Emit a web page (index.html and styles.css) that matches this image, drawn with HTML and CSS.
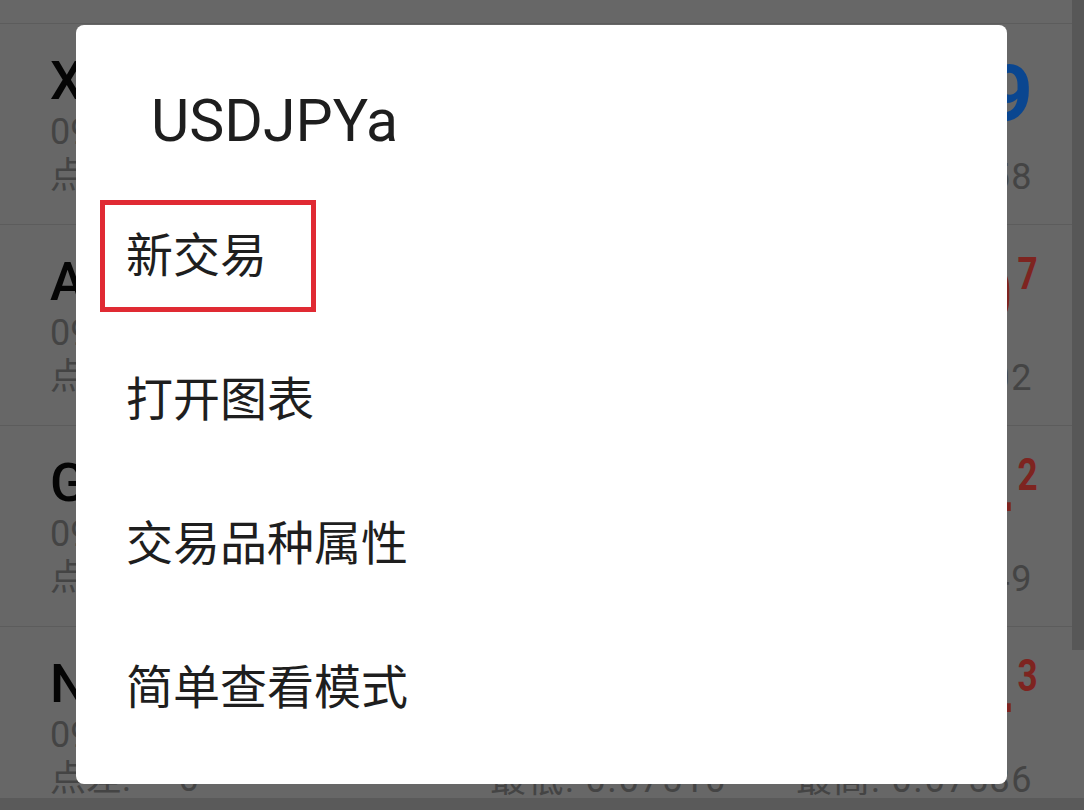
FILE: index.html
```html
<!DOCTYPE html>
<html lang="zh-CN">
<head>
<meta charset="utf-8">
<title>USDJPYa</title>
<link rel="stylesheet" href="styles.css">
</head>
<body>
<div class="screen">
  <div class="quotes">
    <div class="row row-stub"></div>
    <div class="row">
      <div class="col col-left">
        <div class="symbol">XAUUSDa</div>
        <div class="sub">09:41:27</div>
        <div class="sub sub-last">点差:<span class="spread">27</span></div>
      </div>
      <div class="col col-mid">
        <div class="price blue"><span class="p-small">2331.</span><span class="p-big">6</span></div>
        <div class="sub sub-last">最低: 2318.27</div>
      </div>
      <div class="col col-right">
        <div class="price blue"><span class="p-small">2331.</span><span class="p-big">9</span></div>
        <div class="sub sub-last">最高: 2339.58</div>
      </div>
    </div>
    <div class="row">
      <div class="col col-left">
        <div class="symbol">AUDUSDa</div>
        <div class="sub">09:41:26</div>
        <div class="sub sub-last">点差:<span class="spread">18</span></div>
      </div>
      <div class="col col-mid">
        <div class="price red"><span class="p-small">0.66</span><span class="p-big">08</span><span class="p-sup">9</span></div>
        <div class="sub sub-last">最低: 0.66011</div>
      </div>
      <div class="col col-right">
        <div class="price red"><span class="p-small">0.66</span><span class="p-big">10</span><span class="p-sup">7</span></div>
        <div class="sub sub-last">最高: 0.66202</div>
      </div>
    </div>
    <div class="row">
      <div class="col col-left">
        <div class="symbol">GBPUSDa</div>
        <div class="sub">09:41:27</div>
        <div class="sub sub-last">点差:<span class="spread">20</span></div>
      </div>
      <div class="col col-mid">
        <div class="price red"><span class="p-small">1.27</span><span class="p-big">52</span><span class="p-sup">2</span></div>
        <div class="sub sub-last">最低: 1.27410</div>
      </div>
      <div class="col col-right">
        <div class="price red"><span class="p-small">1.27</span><span class="p-big">54</span><span class="p-sup">2</span></div>
        <div class="sub sub-last">最高: 1.27649</div>
      </div>
    </div>
    <div class="row">
      <div class="col col-left">
        <div class="symbol">NZDUSDa</div>
        <div class="sub">09:41:25</div>
        <div class="sub sub-last">点差:<span class="spread spread-wide">0</span></div>
      </div>
      <div class="col col-mid">
        <div class="price red"><span class="p-small">0.67</span><span class="p-big">54</span><span class="p-sup">3</span></div>
        <div class="sub sub-last">最低: 0.67510</div>
      </div>
      <div class="col col-right">
        <div class="price red"><span class="p-small">0.67</span><span class="p-big">54</span><span class="p-sup">3</span></div>
        <div class="sub sub-last">最高: 0.67586</div>
      </div>
    </div>
  </div>
  <div class="bottom-bar"></div>

  <div class="scroll-thumb"></div>

  <div class="dialog">
    <div class="dialog-title">USDJPYa</div>
    <ul class="menu">
      <li class="menu-item"><span class="menu-label is-marked">新交易</span></li>
      <li class="menu-item"><span class="menu-label">打开图表</span></li>
      <li class="menu-item"><span class="menu-label">交易品种属性</span></li>
      <li class="menu-item"><span class="menu-label">简单查看模式</span></li>
    </ul>
  </div>
</div>
</body>
</html>
```

FILE: styles.css
```css
html, body {
  margin: 0;
  padding: 0;
}

body {
  width: 1084px;
  height: 810px;
  overflow: hidden;
  background: #676767;
  font-family: Roboto, "Noto Sans CJK SC", sans-serif;
}

.screen {
  position: relative;
  width: 1084px;
  height: 810px;
  display: flex;
  flex-direction: column;
}

.quotes {
  flex: 1;
  overflow: hidden;
  background: #676767;
}

.row {
  height: 200px;
  border-bottom: 1px solid #5c5c5c;
  box-sizing: content-box;
  display: grid;
  grid-template-columns: 1fr 240px 240px;
  column-gap: 66px;
  padding: 0 51px 0 50px;
}

.row-stub {
  height: 23px;
}

.col {
  display: flex;
  flex-direction: column;
  padding-top: 26px;
  min-width: 0;
}

.col-mid,
.col-right {
  align-items: flex-end;
  text-align: right;
}

.symbol {
  font-size: 53px;
  line-height: 62px;
  font-weight: 500;
  color: #050505;
  white-space: nowrap;
}

.sub {
  font-size: 36px;
  line-height: 40px;
  color: #444444;
  white-space: nowrap;
}

.sub-last {
  line-height: 44px;
  margin-top: 2px;
}

.col-mid .sub-last,
.col-right .sub-last {
  letter-spacing: 1.5px;
}

.col-left .sub:first-of-type {
  margin-top: -1px;
}

.spread {
  margin-left: 10px;
}

.spread-wide {
  margin-left: 48px;
}

.price {
  height: 89px;
  font-size: 80px;
  line-height: 89px;
  margin-bottom: 14px;
  white-space: nowrap;
  font-weight: 700;
}

.p-small {
  font-size: 44px;
  font-weight: 700;
}

.p-big {
  font-size: 80px;
  font-weight: 700;
}

.p-sup {
  display: inline-block;
  font-size: 45px;
  line-height: 0;
  font-weight: 700;
  vertical-align: 33px;
  margin-left: 0;
  width: 20px;
  transform: scaleX(0.78);
  transform-origin: right center;
  text-align: right;
}

.blue {
  color: #0a4690;
}

.red {
  color: #7e2420;
}

.bottom-bar {
  height: 12px;
  background: #5a5a5a;
}

.scroll-thumb {
  position: absolute;
  top: 0;
  right: 0;
  width: 12px;
  height: 650px;
  background: #575757;
}

.dialog {
  position: absolute;
  left: 76px;
  top: 25px;
  width: 931px;
  height: 759px;
  background: #ffffff;
  border-radius: 8px;
  box-sizing: border-box;
}

.dialog-title {
  padding: 60px 0 0 75px;
  height: 72px;
  margin-bottom: 27px;
  font-family: Roboto, sans-serif;
  font-size: 59px;
  line-height: 72px;
  color: #1e1e1e;
}

.menu {
  list-style: none;
  margin: 0;
  padding: 0;
}

.menu-item {
  height: 144px;
  display: flex;
  align-items: center;
  padding-left: 24px;
}

.menu-label {
  display: inline-flex;
  align-items: center;
  box-sizing: border-box;
  width: 216px;
  height: 112px;
  border: 5px solid transparent;
  padding-left: 21px;
  padding-bottom: 10px;
  font-family: "Noto Sans CJK SC", sans-serif;
  font-size: 47px;
  line-height: 1;
  color: #1e1e1e;
  white-space: nowrap;
}

.menu-label.is-marked {
  border-color: #e02a33;
}
```
